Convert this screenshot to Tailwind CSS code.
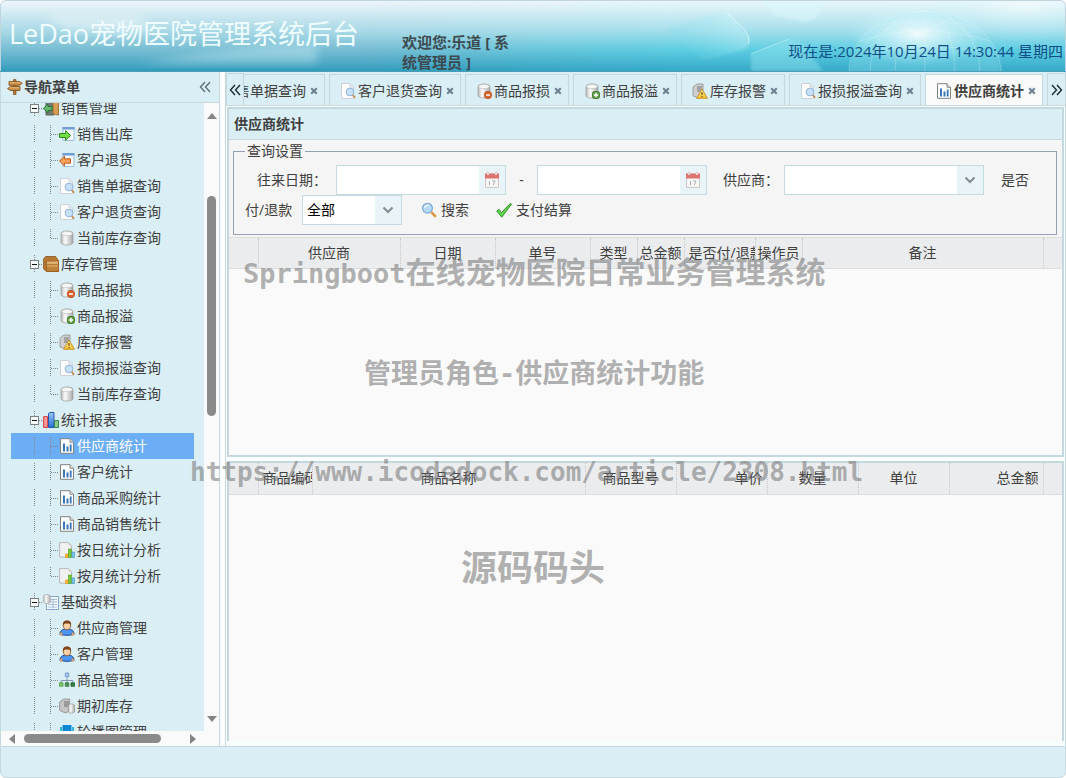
<!DOCTYPE html>
<html lang="zh-CN">
<head>
<meta charset="utf-8">
<meta name="viewport" content="width=device-width, initial-scale=1">
<title>LeDao宠物医院管理系统后台</title>
<script src="https://cdn.jsdelivr.net/npm/@tailwindcss/browser@4"></script>
</head>
<body class="relative flex h-screen flex-col overflow-hidden bg-white font-['Open_Sans','Noto_Sans_CJK_SC',sans-serif] text-sm leading-5 text-[#404040]">

<!-- Icon sprite -->
<svg class="absolute size-0" xmlns="http://www.w3.org/2000/svg" aria-hidden="true">
  <defs>
    <linearGradient id="gCyl" x1="0" x2="1"><stop offset="0" stop-color="#b9b9b9"/><stop offset=".35" stop-color="#fbfbfb"/><stop offset="1" stop-color="#a8a8a8"/></linearGradient>
    <linearGradient id="gWood" x1="0" x2="0" y1="0" y2="1"><stop offset="0" stop-color="#e9bd7e"/><stop offset="1" stop-color="#b8792f"/></linearGradient>
    <linearGradient id="gBlue" x1="0" x2="0" y1="0" y2="1"><stop offset="0" stop-color="#9cc8f6"/><stop offset="1" stop-color="#2b6ed2"/></linearGradient>
    <linearGradient id="gWarn" x1="0" x2="0" y1="0" y2="1"><stop offset="0" stop-color="#fff3a8"/><stop offset="1" stop-color="#f6c02f"/></linearGradient>
  </defs>
  <symbol id="cyl" viewBox="0 0 16 16"><path d="M2 3.500C2 2 4.500 1 8 1s6 1 6 2.500v9C14 14 11.500 15 8 15s-6-1-6-2.500z" fill="url(#gCyl)" stroke="#999" stroke-width=".7"/><ellipse cx="8" cy="3.600" rx="5.500" ry="2.100" fill="#f7f7f7" stroke="#bbb" stroke-width=".6"/></symbol>
  <symbol id="cylminus" viewBox="0 0 16 16"><use href="#cyl"/><circle cx="12" cy="12" r="3.700" fill="#dc622c" stroke="#b94516" stroke-width=".7"/><path d="M10 12h4" stroke="#fff" stroke-width="1.500"/></symbol>
  <symbol id="cylplus" viewBox="0 0 16 16"><use href="#cyl"/><rect x="8.500" y="8.500" width="7" height="7" rx="2" fill="#5d9c3f" stroke="#2f6e1c" stroke-width=".8"/><path d="M12 9.800v4.400M9.800 12h4.400" stroke="#fff" stroke-width="1.500"/></symbol>
  <symbol id="warn" viewBox="0 0 16 16"><path d="M1 4l4-3h6v12l-4 2-6-2z" fill="#cfcfcf" stroke="#909090" stroke-width=".8"/><path d="M5 4h5M5 6h5M5 8h4" stroke="#777"/><path d="M10 6l5.500 9.300h-11z" fill="url(#gWarn)" stroke="#c98f22" stroke-width=".9"/><path d="M10 9v3M10 13v1.200" stroke="#8a5b10" stroke-width="1.300"/></symbol>
  <symbol id="doc" viewBox="0 0 16 16"><path d="M1.500 .500h8.500l3.500 3.500v11.500h-12z" fill="#fdfdfe" stroke="#c3c9d2" stroke-width=".8"/><path d="M10 .500v3.500h3.500" fill="#e6ebf2" stroke="#c3c9d2" stroke-width=".7"/><circle cx="10" cy="9" r="3.900" fill="#c5e0f8" stroke="#93b4dc"/><path d="M12.800 12l2.200 2.900" stroke="#c68f57" stroke-width="1.900"/></symbol>
  <symbol id="stat" viewBox="0 0 16 16"><path d="M1.500 .700h9.500l3.500 3.600v11h-13z" fill="#fff" stroke="#808080"/><path d="M11 .700v3.600h3.500" fill="#ddd" stroke="#808080" stroke-width=".9"/><path d="M4 5.500h2v8h-2zM7.500 8.500h2v5h-2zM10.800 6.500h1.800v7h-1.800z" fill="#3976ba"/></symbol>
  <symbol id="analy" viewBox="0 0 16 16"><path d="M.600 .600h9l3 3v11.500h-12z" fill="#f1f1f1" stroke="#aaa" stroke-width=".8"/><path d="M9.600 .600v3h3" fill="#ccc"/><path d="M6.500 12h2.500v3.500h-2.500z" fill="#ffbf38" stroke="#df8b0c" stroke-width=".6"/><path d="M9.500 7h2.800v8.500h-2.800z" fill="#7bcb36" stroke="#3f951a" stroke-width=".6"/><path d="M13 10h2.600v5.500h-2.600z" fill="#81cbed" stroke="#328bbc" stroke-width=".6"/></symbol>
  <symbol id="out" viewBox="0 0 16 16"><path d="M4 1.500h11v13h-11z" fill="#f6fafd" stroke="#9cbfe2"/><path d="M3.500 1h12v2.500h-12z" fill="#709dd8"/><path d="M.600 7.500h6v-2.800l5 4.800-5 4.800v-2.800h-6z" fill="#74df45" stroke="#2b8918"/></symbol>
  <symbol id="back" viewBox="0 0 16 16"><path d="M4 1.500h11v13h-11z" fill="#f6fafd" stroke="#9cbfe2"/><path d="M3.500 1h12v2.500h-12z" fill="#709dd8"/><path d="M11.500 6.800h-6v-2.600l-5 4.800 5 4.800v-2.600h6z" fill="#f7a35d" stroke="#c65a16"/></symbol>
  <symbol id="door" viewBox="0 0 16 16"><path d="M3 1h8v14h-8z" fill="#777b74" stroke="#5a5d58"/><path d="M10 1h5.500v14l-5.500-1z" fill="#d89b52" stroke="#986225" stroke-width=".8"/><path d="M9 6.500h-4v-2.500l-4.700 4.500 4.700 4.500v-2.500h4z" fill="#63b768" stroke="#26743a"/></symbol>
  <symbol id="box" viewBox="0 0 16 16"><path d="M.600 3l2-2.400h10l2.800 4v10.800h-12l-2.800-2.500z" fill="#b87a36" stroke="#8a561f" stroke-width=".9"/><path d="M3.500 5h12v10.400h-12z" fill="url(#gWood)" stroke="#9a6124" stroke-width=".9"/><path d="M4 8.500h11M4 12h11M7 2v2" stroke="#ad7030" stroke-width=".8"/></symbol>
  <symbol id="chart" viewBox="0 0 16 16"><path d="M.600 4.600h4v10.900h-4z" fill="#f59a9a" stroke="#dc3e44"/><path d="M5.500 1.500l1.200-1h4.300v15h-5.500z" fill="url(#gBlue)" stroke="#2557b2"/><path d="M11.500 8.600h4v6.900h-4z" fill="#8fcb8c" stroke="#2f8848"/></symbol>
  <symbol id="data" viewBox="0 0 16 16"><path d="M3.500 2.500h12v13h-12z" fill="#fafdff" stroke="#84a5d2"/><path d="M7 5.500h7M5 8h9M5 10.500h9M5 13h9M10 4v10.500" stroke="#a4bee0"/><path d="M.600 2c1-2 5.800-2 6.800 0v6c-1 2-5.800 2-6.800 0z" fill="url(#gCyl)" stroke="#aaa" stroke-width=".7"/></symbol>
  <symbol id="user" viewBox="0 0 16 16"><path d="M1 14.500c0-4 2.500-5.500 7-5.500s7 1.500 7 5.500q-7 1.800-14 0z" fill="#4b95f0" stroke="#2453a5"/><path d="M1 14.700c0-1.500 1-2.500 2-2l.500 2.500zM15 14.700c0-1.500-1-2.500-2-2l-.500 2.500z" fill="#f5c293" stroke="#b16b31" stroke-width=".5"/><ellipse cx="8" cy="5.500" rx="3.600" ry="4.200" fill="#fbd1a5" stroke="#8b5125" stroke-width=".8"/><path d="M4 6c-.500-4 1-5.500 4-5.500s4.600 1.500 4 5.500c-.800-2.500-2-2.500-4-2.500s-3.200 0-4 2.500z" fill="#7c411a"/></symbol>
  <symbol id="tree" viewBox="0 0 16 16"><path d="M8 5v3M2.200 11v-2.500h11.600v2.500M8 8v3" fill="none" stroke="#8298b4"/><path d="M6.300 1h3.500v3.500h-3.500z" fill="#a9c9f3" stroke="#6b93cd" stroke-width=".8"/><path d="M.500 10.800h3.500v3.500h-3.500z" fill="#83cc6b" stroke="#459b3c" stroke-width=".8"/><path d="M6.300 10.800h3.500v3.500h-3.500z" fill="#4d9954" stroke="#307439" stroke-width=".8"/><path d="M12 10.800h3.500v3.500h-3.500z" fill="#328143" stroke="#1e6131" stroke-width=".8"/></symbol>
  <symbol id="server" viewBox="0 0 16 16"><path d="M.600 4l4-3h6v12l-4 2-6-2.500z" fill="#c5c5c5" stroke="#8d8d8d" stroke-width=".8"/><path d="M5 4h5M5 6h5M5 8h4" stroke="#717171"/><path d="M9.500 7c1-1.500 5-1.500 6 0v7c-1 1.500-5 1.500-6 0z" fill="url(#gCyl)" stroke="#999" stroke-width=".7"/></symbol>
  <symbol id="img" viewBox="0 0 16 16"><path d="M3.500 1h9v13h-9z" fill="#0d86d4"/><path d="M1 3h2v9h-2zM13 3h2v9h-2z" fill="#38b3e8"/></symbol>
  <symbol id="sign" viewBox="0 0 16 16"><path d="M6.500 .600h2.500v15h-2.500z" fill="#b87a36" stroke="#774719" stroke-width=".7"/><path d="M2 2.500h10.500l2.800 1.800-2.800 2h-10.500z" fill="url(#gWood)" stroke="#8b5822" stroke-width=".9"/><path d="M13 7.500h-9.500l-3 2.200 3 1.800h9.500z" fill="url(#gWood)" stroke="#8b5822" stroke-width=".9"/></symbol>
  <symbol id="find" viewBox="0 0 16 16"><circle cx="6.500" cy="6.200" r="4.900" fill="#b4daf8" stroke="#7ba5d8" stroke-width="1.200"/><path d="M3.500 5.500q1.500-2.800 4.500-2.200" fill="none" stroke="#fff" stroke-width="1.300"/><path d="M10.300 10l4.500 4.800" stroke="#dc9442" stroke-width="2.500"/></symbol>
  <symbol id="check" viewBox="0 0 16 16"><path d="M.700 9l2.500-1.600 2.300 3.200 8.800-9.200 1.200.800-9.700 13z" fill="#62d44c" stroke="#258b22" stroke-width=".9"/></symbol>
  <symbol id="cal" viewBox="0 0 16 18"><path d="M1.500 3h13v13.500h-13z" fill="#f8f7f7" stroke="#cfc7c7"/><path d="M1 2.500h14v5h-14z" fill="#de7370"/><path d="M4 .500v3.500M12 .500v3.500" stroke="#f5eded" stroke-width="2.200"/><path d="M4 .800v3M12 .800v3" stroke="#c9a8a8" stroke-width=".8"/><path d="M5.500 10v4M8 10h3l-1.800 4" fill="none" stroke="#b1adad"/></symbol>
  <symbol id="x" viewBox="0 0 8 8"><path d="M1.200 1.200l5.600 5.600M6.800 1.200l-5.600 5.600" stroke="#6d7f91" stroke-width="2"/></symbol>
  <symbol id="down" viewBox="0 0 12 8"><path d="M1.500 1.500l4.500 4.500 4.500-4.500" fill="none" stroke="#838c90" stroke-width="2"/></symbol>
  <symbol id="ll" viewBox="0 0 12 12"><path d="M6 1l-4.500 5 4.500 5M11 1l-4.500 5 4.500 5" fill="none" stroke="currentColor" stroke-width="1.400"/></symbol>
  <symbol id="rr" viewBox="0 0 12 12"><path d="M1 1l4.500 5-4.500 5M6 1l4.500 5-4.500 5" fill="none" stroke="currentColor" stroke-width="1.400"/></symbol>
</svg>

<!-- Banner -->
<header class="relative flex h-[71px] shrink-0 overflow-hidden rounded-t-md border border-b-0 border-[#bfd4dc] bg-linear-to-b from-[#edf6fa] via-[#a5d7e5] via-45% to-[#309dbd]">
  <svg class="absolute right-0 top-0 h-full w-[700px]" viewBox="0 0 700 70" preserveAspectRatio="none" aria-hidden="true">
    <defs>
      <linearGradient id="hb" x1="0" x2="0" y1="0" y2="1"><stop offset="0" stop-color="#e9f6fa"/><stop offset=".4" stop-color="#a9e0ec"/><stop offset=".7" stop-color="#5ccde1"/><stop offset="1" stop-color="#35a9c8"/></linearGradient>
      <linearGradient id="hm" x1="0" x2="1"><stop offset="0" stop-color="#000"/><stop offset=".45" stop-color="#fff"/></linearGradient>
      <mask id="fade"><rect width="700" height="70" fill="url(#hm)"/></mask>
      <radialGradient id="glow"><stop offset="0" stop-color="#fff" stop-opacity=".85"/><stop offset="1" stop-color="#c9f5fb" stop-opacity="0"/></radialGradient>
      <linearGradient id="cube" x1="1" x2="0" y1="0" y2="1"><stop offset="0" stop-color="#d7f6fa" stop-opacity=".8"/><stop offset="1" stop-color="#59cfe2" stop-opacity="0"/></linearGradient>
      <filter id="soft"><feGaussianBlur stdDeviation="1.500"/></filter>
      <filter id="smear"><feGaussianBlur stdDeviation="4"/></filter>
    </defs>
    <rect width="700" height="70" fill="url(#hb)" mask="url(#fade)"/>
    <g filter="url(#soft)">
      <path d="M300 28l57-17q5 0 8 3l19 22q2 8-4 12l-40 11z" fill="url(#cube)"/>
      <path d="M397 0h65l-9 14q-7 8-18 6l-26-6z" fill="#d9f7fb" fill-opacity=".55"/>
      <path d="M386 53l38-15q8-1 14 6l20 26h-72z" fill="#92e3ee" fill-opacity=".45"/>
      <ellipse cx="560" cy="72" rx="76" ry="62" fill="#9ce6f1" fill-opacity=".3"/>
    </g>
    <path d="M362 12l17 16q7 9 4 15" fill="none" stroke="#fff" stroke-opacity=".55"/>
    <path d="M386 53l38-15" fill="none" stroke="#c4f3f8" stroke-opacity=".6"/>
    <g fill="none" stroke="#effdff" stroke-opacity=".35" stroke-width=".7"><ellipse cx="560" cy="72" rx="76" ry="62"/><ellipse cx="560" cy="72" rx="55" ry="62"/><ellipse cx="560" cy="72" rx="30" ry="62"/><path d="M560 10v60M495 40q65-20 130 0M486 55q74-20 148 0M510 25q50-12 100 0"/><path d="M500 42l30-18 25 10 30-17 25 22"/></g>
    <ellipse cx="553" cy="33" rx="70" ry="32" fill="url(#glow)"/>
    <ellipse cx="660" cy="5" rx="100" ry="36" fill="url(#glow)" opacity=".6"/>
  </svg>
  <svg class="absolute left-4 top-0 h-full w-[340px]" viewBox="0 0 340 70" aria-hidden="true"><g filter="url(#smear)"><path d="M125 62q100-18 175-20v20z" fill="#cceef4" fill-opacity=".4"/><path d="M30 14h90l16 14-30 6-60-6z" fill="#fff" fill-opacity=".35"/></g></svg>
  <h1 class="relative ml-2 mt-[13px] w-[393px] shrink-0 whitespace-nowrap text-[27px] font-normal leading-10 text-[#f0fdff]">LeDao宠物医院管理系统后台</h1>
  <div class="relative mt-[31px] w-[114px] shrink-0 text-[15px] font-bold text-[#3c4a50]">欢迎您:乐道 [ 系统管理员 ]</div>
  <time class="relative ml-auto mr-[2px] mt-10 whitespace-nowrap text-[15px] text-[#0e4f86]">现在是:2024年10月24日 14:30:44 星期四</time>
</header>

<main class="flex min-h-0 flex-1 border-t border-[#4a9db5] bg-[#fbfdfe]">
  <!-- Navigation -->
  <aside class="flex w-[220px] shrink-0 flex-col border-x border-[#c4d8de] bg-[#fafafa]">
    <div class="flex h-[31px] shrink-0 items-center gap-px border-b border-[#c4d8de] bg-[#daeef5] pl-[6px] pr-2">
      <svg class="size-4"><use href="#sign"/></svg>
      <h2 class="font-bold">导航菜单</h2>
      <button type="button" aria-label="收起" class="ml-auto text-[#5f6f78]"><svg class="size-3"><use href="#ll"/></svg></button>
    </div>
    <div class="flex min-h-0 flex-1">
      <nav class="w-[203px] shrink-0 overflow-hidden bg-[#daeef5] pl-[10px] pr-[10px]">
        <ul id="menu" class="-mt-2"></ul>
      </nav>
      <div class="flex flex-1 flex-col items-center pb-[9px] pt-[10px]" aria-hidden="true">
        <svg class="h-[6px] w-[10px]" viewBox="0 0 10 6"><path d="M0 6l5-6 5 6z" fill="#858585"/></svg>
        <div class="mt-[77px] h-[220px] w-[9px] rounded-full bg-[#8a8a8a]"></div>
        <svg class="mt-auto h-[6px] w-[10px]" viewBox="0 0 10 6"><path d="M0 0l5 6 5-6z" fill="#858585"/></svg>
      </div>
    </div>
    <div class="flex h-[15px] w-[203px] shrink-0 items-center px-2" aria-hidden="true">
      <svg class="h-[10px] w-[6px]" viewBox="0 0 6 10"><path d="M6 0l-6 5 6 5z" fill="#858585"/></svg>
      <div class="ml-[9px] h-[9px] w-[137px] rounded-full bg-[#8a8a8a]"></div>
      <svg class="ml-auto h-[10px] w-[6px]" viewBox="0 0 6 10"><path d="M0 0l6 5-6 5z" fill="#858585"/></svg>
    </div>
  </aside>

  <!-- Workspace -->
  <section class="ml-[5px] flex min-w-0 flex-1 flex-col border-x border-[#c4d8de] bg-[#fafdfe]">
    <div class="flex h-[34px] shrink-0 items-end bg-[#daeef5]">
      <button type="button" aria-label="向左滚动" class="z-10 grid h-[33px] w-[18px] shrink-0 place-items-center border border-[#c4d8de] bg-[#daeef5] text-[#1d2b33]"><svg class="size-3"><use href="#ll"/></svg></button>
      <div id="tabs" role="tablist" class="flex h-8 min-w-0 flex-1 justify-end gap-1 overflow-hidden border-b border-[#c4d8de] pr-1"></div>
      <button type="button" aria-label="向右滚动" class="grid h-[33px] w-[18px] shrink-0 place-items-center border border-r-0 border-[#c4d8de] bg-[#daeef5] text-[#1d2b33]"><svg class="size-3"><use href="#rr"/></svg></button>
    </div>

    <div class="mt-px flex min-h-0 flex-1 flex-col gap-1 px-px">
      <div class="flex h-[350px] shrink-0 flex-col border-2 border-[#c4d8de] bg-[#fafafa]">
        <h2 class="flex h-[31px] shrink-0 items-center border-b border-[#c4d8de] bg-[#daeef5] px-[5px] font-bold">供应商统计</h2>
        <form class="h-[97px] shrink-0 bg-[#f5f5f5] pl-1 pr-[5px] pt-px" onsubmit="return false">
          <fieldset class="h-[94px] border border-[#93a2b3] px-[11px]">
            <legend class="px-[2px]">查询设置</legend>
            <div class="ml-px mt-1 flex h-[30px] items-center whitespace-nowrap">
              <label for="from" class="ml-[11px] w-[79px]">往来日期：</label>
              <div class="flex h-[30px] w-[170px] border border-[#c4dbe2] bg-white">
                <input id="from" class="min-w-0 flex-1 px-1 outline-none">
                <button type="button" aria-label="选择开始日期" class="grid w-[26px] place-items-center bg-[#e9f4f9]"><svg class="h-[18px] w-4"><use href="#cal"/></svg></button>
              </div>
              <span class="w-[31px] text-center">-</span>
              <div class="flex h-[30px] w-[170px] border border-[#c4dbe2] bg-white">
                <input id="to" aria-label="结束日期" class="min-w-0 flex-1 px-1 outline-none">
                <button type="button" aria-label="选择结束日期" class="grid w-[26px] place-items-center bg-[#e9f4f9]"><svg class="h-[18px] w-4"><use href="#cal"/></svg></button>
              </div>
              <label for="supplier" class="ml-4 w-[61px]">供应商：</label>
              <div class="grid h-[30px] w-[200px] grid-cols-[1fr_26px] border border-[#c4dbe2] bg-white">
                <select id="supplier" class="col-span-2 col-start-1 row-start-1 appearance-none px-1 outline-none"><option></option></select>
                <span class="pointer-events-none col-start-2 row-start-1 grid place-items-center bg-[#e9f4f9]"><svg class="h-2 w-3"><use href="#down"/></svg></span>
              </div>
              <label for="paid" class="ml-[17px]">是否</label>
            </div>
            <div class="flex h-[30px] items-center whitespace-nowrap">
              <label for="paid" class="w-[57px]">付/退款</label>
              <div class="grid h-[30px] w-[100px] shrink-0 grid-cols-[1fr_26px] border border-[#c4dbe2] bg-white">
                <select id="paid" class="col-span-2 col-start-1 row-start-1 appearance-none px-1 text-black outline-none"><option>全部</option></select>
                <span class="pointer-events-none col-start-2 row-start-1 grid place-items-center bg-[#e9f4f9]"><svg class="h-2 w-3"><use href="#down"/></svg></span>
              </div>
              <button type="button" class="ml-[19px] flex items-center gap-1"><svg class="size-4"><use href="#find"/></svg>搜索</button>
              <button type="button" class="ml-[27px] flex items-center gap-1"><svg class="size-4"><use href="#check"/></svg>支付结算</button>
            </div>
          </fieldset>
        </form>
        <table class="w-full table-fixed border-collapse border-y border-[#dcdddd] bg-[#ebecee]">
          <colgroup><col class="w-[29px]"><col class="w-[142px]"><col class="w-[95px]"><col class="w-[95px]"><col class="w-[47px]"><col class="w-[47px]"><col class="w-[71px]"><col class="w-[47px]"><col><col class="w-[19px]"></colgroup>
          <thead><tr class="h-[31px] [&>*]:overflow-hidden [&>*]:whitespace-nowrap [&>*]:border-r [&>*]:border-dotted [&>*]:border-[#c8c8c8] [&>*]:p-0 [&>*]:font-normal">
            <td></td><th>供应商</th><th>日期</th><th>单号</th><th>类型</th><th>总金额</th><th class="text-left"><span class="pl-1">是否付/退款</span></th><th>操作员</th><th>备注</th><td class="border-r-0!"></td>
          </tr></thead>
        </table>
      </div>

      <div class="mb-[5px] min-h-0 flex-1 border-2 border-b-0 border-[#c4d8de] bg-[#fafafa]">
        <table class="w-full table-fixed border-collapse border-b border-[#dcdddd] bg-[#ebecee]">
          <colgroup><col class="w-[29px]"><col class="w-[54px]"><col><col class="w-[91px]"><col class="w-[91px]"><col class="w-[91px]"><col class="w-[91px]"><col class="w-[94px]"><col class="w-[19px]"></colgroup>
          <thead><tr class="h-[31px] [&>*]:overflow-hidden [&>*]:whitespace-nowrap [&>*]:border-r [&>*]:border-dotted [&>*]:border-[#c8c8c8] [&>*]:p-0 [&>*]:font-normal">
            <td></td><th class="text-left"><span class="pl-1">商品编码</span></th><th>商品名称</th><th>商品型号</th><th class="pr-1! text-right">单价</th><th>数量</th><th>单位</th><th class="pr-1! text-right">总金额</th><td class="border-r-0!"></td>
          </tr></thead>
        </table>
      </div>
    </div>
  </section>
</main>

<footer class="h-8 shrink-0 rounded-b-md border border-[#c4d8de] bg-[#daeef5]"></footer>

<!-- Watermarks laid over the page -->
<div class="pointer-events-none absolute inset-0 whitespace-nowrap font-['DejaVu_Sans_Mono','Noto_Sans_CJK_SC',monospace] font-bold text-[#707070]/55">
  <p class="absolute left-[243px] top-[253px] flex items-baseline text-[30px] leading-10"><span class="text-[27px]">Springboot</span>在线宠物医院日常业务管理系统</p>
  <p class="absolute left-[364px] top-[354px] text-[27px] leading-10">管理员角色-供应商统计功能</p>
  <p class="absolute left-[190px] top-[452px] text-[26px] leading-10">https://www.icodedock.com/article/2308.html</p>
  <p class="absolute left-[461px] top-[549px] text-[36px] leading-10">源码码头</p>
</div>

<script>
const menu = [
  ['销售管理', 'door', [['销售出库', 'out'], ['客户退货', 'back'], ['销售单据查询', 'doc'], ['客户退货查询', 'doc'], ['当前库存查询', 'cyl']]],
  ['库存管理', 'box', [['商品报损', 'cylminus'], ['商品报溢', 'cylplus'], ['库存报警', 'warn'], ['报损报溢查询', 'doc'], ['当前库存查询', 'cyl']]],
  ['统计报表', 'chart', [['供应商统计', 'stat', true], ['客户统计', 'stat'], ['商品采购统计', 'stat'], ['商品销售统计', 'stat'], ['按日统计分析', 'analy'], ['按月统计分析', 'analy']]],
  ['基础资料', 'data', [['供应商管理', 'user'], ['客户管理', 'user'], ['商品管理', 'tree'], ['期初库存', 'server'], ['轮播图管理', 'img']]]
];
const dots = 'fill="none" stroke="#858585" stroke-dasharray="1 1"';
const icon = id => `<svg class="size-4 shrink-0"><use href="#${id}"/></svg>`;
document.getElementById('menu').innerHTML = menu.map(([name, ic, kids]) => `
  <li>
    <button type="button" class="flex h-[26px] w-full items-center pl-4 whitespace-nowrap">
      <svg class="h-[18px] w-4 shrink-0" viewBox="0 0 16 18"><path d="M7.500 0v18M12 9.500h4" ${dots}/><rect x="3.500" y="5.500" width="8" height="8" fill="#f8fbfc" stroke="#808080"/><path d="M5 9.500h5" stroke="#111"/></svg>
      ${icon(ic)}<span class="pl-[2px]">${name}</span>
    </button>
    <ul>${kids.map(([t, k, on], i) => `
      <li><a href="#" class="${on ? 'flex h-[26px] items-center pl-4 whitespace-nowrap bg-[#6caef5] text-white' : 'flex h-[26px] items-center pl-4 whitespace-nowrap'}">
        <svg class="h-[18px] w-8 shrink-0" viewBox="0 0 32 18"><path d="M7.500 0v18M23.500 0v${i === kids.length - 1 ? 9 : 18}M24 9.500h8" ${dots}/></svg>
        ${icon(k)}<span class="pl-[2px]">${t}</span></a></li>`).join('')}
    </ul>
  </li>`).join('');

const tabs = [['销售单据查询', 'doc'], ['客户退货查询', 'doc'], ['商品报损', 'cylminus'], ['商品报溢', 'cylplus'], ['库存报警', 'warn'], ['报损报溢查询', 'doc'], ['供应商统计', 'stat', true]];
document.getElementById('tabs').innerHTML = tabs.map(([t, k, on]) => `
  <div class="${on ? 'flex h-8 shrink-0 items-center border border-b-0 border-[#c4d8de] bg-[#fafafa] pl-[10px] pr-[6px] font-bold' : 'flex h-8 shrink-0 items-center border border-b-0 border-[#c4d8de] pl-[10px] pr-[6px]'}">
    ${icon(k)}<button type="button" role="tab" aria-selected="${!!on}" class="ml-[2px]">${t}</button>
    <button type="button" aria-label="关闭${t}" class="ml-1"><svg class="size-2"><use href="#x"/></svg></button>
  </div>`).join('');
</script>
</body>
</html>
